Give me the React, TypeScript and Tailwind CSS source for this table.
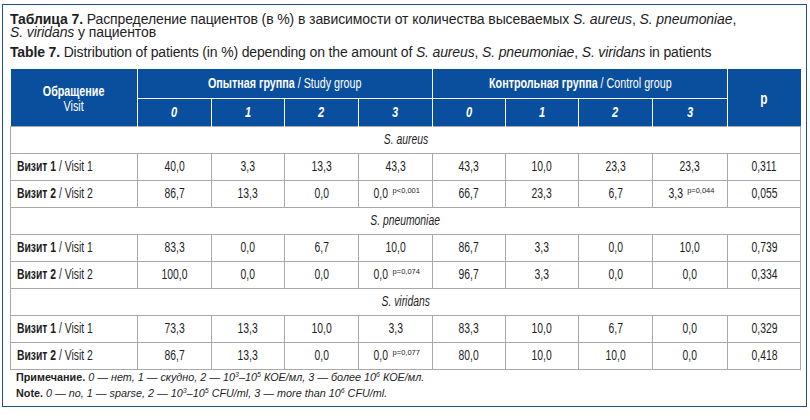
import React from 'react';

type Row = { visit: 1 | 2; vals: string[]; p: string; sup?: { study?: string; control?: string } };

const sections: { name: string; rows: Row[] }[] = [
    {
        name: 'S. aureus',
        rows: [
            { visit: 1, vals: ['40,0', '3,3', '13,3', '43,3', '43,3', '10,0', '23,3', '23,3'], p: '0,311' },
            { visit: 2, vals: ['86,7', '13,3', '0,0', '0,0', '66,7', '23,3', '6,7', '3,3'], p: '0,055', sup: { study: 'p<0,001', control: 'p=0,044' } },
        ],
    },
    {
        name: 'S. pneumoniae',
        rows: [
            { visit: 1, vals: ['83,3', '0,0', '6,7', '10,0', '86,7', '3,3', '0,0', '10,0'], p: '0,739' },
            { visit: 2, vals: ['100,0', '0,0', '0,0', '0,0', '96,7', '3,3', '0,0', '0,0'], p: '0,334', sup: { study: 'p=0,074' } },
        ],
    },
    {
        name: 'S. viridans',
        rows: [
            { visit: 1, vals: ['73,3', '13,3', '10,0', '3,3', '83,3', '10,0', '6,7', '0,0'], p: '0,329' },
            { visit: 2, vals: ['86,7', '13,3', '0,0', '0,0', '80,0', '10,0', '10,0', '0,0'], p: '0,418', sup: { study: 'p=0,077' } },
        ],
    },
];

// condensed look of the print font
const Narrow: React.FC<{ children: React.ReactNode; left?: boolean }> = ({ children, left }) => (
    <span className={`inline-block scale-x-[0.74] whitespace-nowrap ${left ? 'origin-left' : 'origin-center'}`}>{children}</span>
);

const Sup: React.FC<{ text: string }> = ({ text }) => (
    <sup className="ml-[2px] text-[7.5px] top-[-5px]">{text}</sup>
);

const cell = 'border border-[#a8a8a8] text-center';

const App: React.FC = () => {
    return (
        <div className="w-[810px] h-[420px] bg-white pt-[4px] pl-[2px] font-['Liberation_Sans',sans-serif] text-[#1e1e1e]">
            <div className="w-[805px] h-[403px] border border-[#1d4f99] pl-[7px] pt-[8px]">
                {/* Caption */}
                <p className="text-[14px] leading-[13px] tracking-[-0.1px]">
                    <b>Таблица 7.</b> Распределение пациентов (в %) в зависимости от количества высеваемых <i>S. aureus</i>, <i>S. pneumoniae</i>,
                    <br />
                    <i>S. viridans</i> у пациентов
                </p>
                <p className="mt-[7px] text-[14px] leading-[13px] tracking-[-0.15px]">
                    <b>Table 7.</b> Distribution of patients (in %) depending on the amount of <i>S. aureus</i>, <i>S. pneumoniae</i>, <i>S. viridans</i> in patients
                </p>

                {/* Table */}
                <table className="mt-[10px] w-[790px] table-fixed border-collapse text-[14px]">
                    <colgroup>
                        <col className="w-[127px]" />
                        <col className="w-[74px]" />
                        <col className="w-[73px]" />
                        <col className="w-[74px]" />
                        <col className="w-[74px]" />
                        <col className="w-[73px]" />
                        <col className="w-[73px]" />
                        <col className="w-[74px]" />
                        <col className="w-[75px]" />
                        <col className="w-[73px]" />
                    </colgroup>
                    <thead className="bg-[#0a4f9e] text-white">
                        <tr className="h-[29px]">
                            <th rowSpan={2} className="border-r border-white text-[14.5px] leading-[15px] pt-[4px]">
                                <Narrow>
                                    <span className="block font-bold">Обращение</span>
                                    <span className="block font-normal">Visit</span>
                                </Narrow>
                            </th>
                            <th colSpan={4} className="border-r border-b border-white text-[14.5px] pt-[1px]">
                                <Narrow>
                                    <span className="font-bold">Опытная группа</span>
                                    <span className="font-normal"> / Study group</span>
                                </Narrow>
                            </th>
                            <th colSpan={4} className="border-r border-b border-white text-[14.5px] pt-[1px]">
                                <Narrow>
                                    <span className="font-bold">Контрольная группа</span>
                                    <span className="font-normal"> / Control group</span>
                                </Narrow>
                            </th>
                            <th rowSpan={2} className="font-bold text-[16px] pt-[3px]">
                                <Narrow>p</Narrow>
                            </th>
                        </tr>
                        <tr className="h-[28px]">
                            {['0', '1', '2', '3', '0', '1', '2', '3'].map((n, i) => (
                                <th key={i} className="border-r border-white font-bold italic text-[15px]">
                                    <Narrow>{n}</Narrow>
                                </th>
                            ))}
                        </tr>
                    </thead>
                    <tbody>
                        {sections.map(sec => (
                            <React.Fragment key={sec.name}>
                                <tr className="h-[27px]">
                                    <td colSpan={10} className={`${cell} italic`}>
                                        <Narrow>{sec.name}</Narrow>
                                    </td>
                                </tr>
                                {sec.rows.map(r => (
                                    <tr key={r.visit} className="h-[27px]">
                                        <td className="border border-[#a8a8a8] pl-[6px]">
                                            <Narrow left>
                                                <span className="font-bold">Визит {r.visit}</span>
                                                <span> / Visit {r.visit}</span>
                                            </Narrow>
                                        </td>
                                        {r.vals.map((v, i) => (
                                            <td key={i} className={cell}>
                                                <Narrow>{v}</Narrow>
                                                {i === 3 && r.sup?.study && <Sup text={r.sup.study} />}
                                                {i === 7 && r.sup?.control && <Sup text={r.sup.control} />}
                                            </td>
                                        ))}
                                        <td className={cell}>
                                            <Narrow>{r.p}</Narrow>
                                        </td>
                                    </tr>
                                ))}
                            </React.Fragment>
                        ))}
                    </tbody>
                </table>

                {/* Notes */}
                <p className="pl-[6px] text-[10.8px] leading-[15px]">
                    <b>Примечание.</b> <i>0 — нет, 1 — скудно, 2 — 10<sup className="text-[7px]">3</sup>–10<sup className="text-[7px]">5</sup> КОЕ/мл, 3 — более 10<sup className="text-[7px]">6</sup> КОЕ/мл.</i>
                </p>
                <p className="mt-[1px] pl-[6px] text-[10.8px] leading-[15px]">
                    <b>Note.</b> <i>0 — no, 1 — sparse, 2 — 10<sup className="text-[7px]">3</sup>–10<sup className="text-[7px]">5</sup> CFU/ml, 3 — more than 10<sup className="text-[7px]">6</sup> CFU/ml.</i>
                </p>
            </div>
        </div>
    );
};

export default App;
